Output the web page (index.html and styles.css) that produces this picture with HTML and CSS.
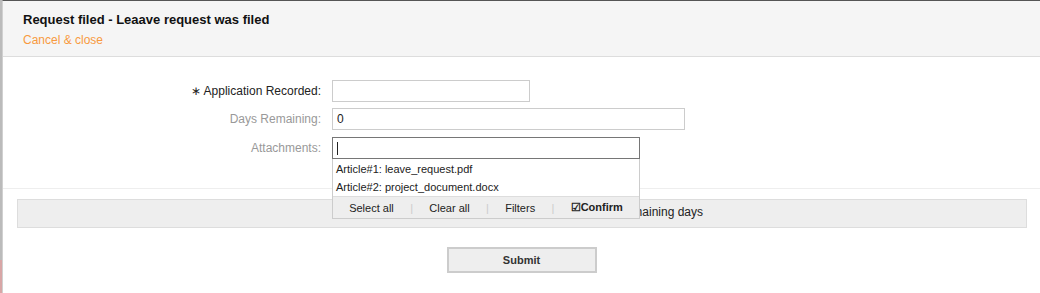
FILE: index.html
```html
<!DOCTYPE html>
<html lang="en">

<head>
    <meta charset="UTF-8">
    <meta name="viewport" content="width=device-width, initial-scale=1.0">
    <title>Request filed</title>
    <link rel="stylesheet" href="styles.css">
</head>

<body>
    <div class="backdrop"></div>

    <div class="dialog">
        <div class="dialog-header">
            <h1 class="title">Request filed - Leaave request was filed</h1>
            <a class="cancel" href="#">Cancel &amp; close</a>
        </div>

        <div class="form">
            <label class="label required"><span class="star">&lowast;</span> Application Recorded:</label>
            <div class="field"><input class="input short" type="text"></div>

            <label class="label">Days Remaining:</label>
            <div class="field"><input class="input long" type="text" value="0"></div>

            <label class="label last">Attachments:</label>
            <div class="field last">
                <div class="input medium focused"><span class="caret"></span></div>
                <div class="dropdown">
                    <ul class="options">
                        <li>Article#1: leave_request.pdf</li>
                        <li>Article#2: project_document.docx</li>
                    </ul>
                    <div class="actions">
                        <span class="action">Select all</span>
                        <span class="sep">|</span>
                        <span class="action">Clear all</span>
                        <span class="sep">|</span>
                        <span class="action">Filters</span>
                        <span class="sep">|</span>
                        <span class="action bold">&#9745;Confirm</span>
                    </div>
                </div>
            </div>
        </div>

        <div class="notice">Check your remaining days</div>

        <div class="buttons">
            <button class="submit" type="button">Submit</button>
        </div>
    </div>
</body>

</html>
```

FILE: styles.css
```css
body {
    font-family: "Liberation Sans", Arial, sans-serif;
    margin: 0;
    display: flex;
    height: 293px;
    overflow: hidden;
    background: #fff;
}

.backdrop {
    width: 2px;
    background: linear-gradient(#bbb 0, #bbb 260px, #d8a6a6 260px);
}

.dialog {
    flex: 1;
    border-top: 1px solid #555;
    border-left: 1px solid #d0d0d0;
    background: #fff;
}

.dialog-header {
    background: #f5f5f5;
    border-bottom: 1px solid #ddd;
    padding: 11px 20px 9px;
}

.title {
    font-size: 13px;
    line-height: 15px;
    font-weight: bold;
    color: #111;
    margin: 0 0 6px;
}

.cancel {
    display: block;
    font-size: 12px;
    line-height: 14px;
    color: #f89a3e;
    text-decoration: none;
}

.form {
    display: grid;
    grid-template-columns: 318px 1fr;
    column-gap: 11px;
    row-gap: 6px;
    padding: 23px 0 29px;
    border-bottom: 1px solid #eee;
}

.last {
    margin-top: 1px;
}

.label {
    font-size: 12px;
    color: #999;
    text-align: right;
    line-height: 22px;
}

.label.required {
    color: #222;
}

.star {
    font-size: 12px;
}

.field {
    position: relative;
    height: 22px;
}

.input {
    box-sizing: border-box;
    height: 22px;
    border: 1px solid #ccc;
    font-family: inherit;
    font-size: 12px;
    padding: 0 4px;
    margin: 0;
    color: #222;
    display: block;
}

.input.short {
    width: 198px;
}

.input.long {
    width: 353px;
}

.input.medium {
    width: 308px;
}

.input.focused {
    border-color: #767676;
    display: flex;
    align-items: center;
}

.caret {
    width: 1px;
    height: 13px;
    background: #222;
}

.dropdown {
    position: absolute;
    top: 22px;
    left: 0;
    width: 308px;
    box-sizing: border-box;
    border: 1px solid #ccc;
    border-top: none;
    background: #fff;
    font-size: 11px;
    z-index: 2;
}

.options {
    list-style: none;
    margin: 0;
    padding: 1px 0 0;
}

.options li {
    padding: 0 3px;
    line-height: 18px;
    color: #222;
}

.actions {
    display: flex;
    justify-content: space-around;
    align-items: center;
    background: #eee;
    border-top: 1px solid #ddd;
    height: 21px;
    padding: 0 8px;
    color: #222;
}

.sep {
    color: #ccc;
}

.bold {
    font-weight: bold;
}

.notice {
    margin: 10px 13px 0 14px;
    padding-right: 323px;
    height: 27px;
    line-height: 25px;
    background: #eee;
    border: 1px solid #ddd;
    font-size: 12px;
    color: #222;
    text-align: right;
}

.buttons {
    display: flex;
    justify-content: center;
    padding-top: 19px;
}

.submit {
    width: 150px;
    height: 26px;
    background: #eee;
    border: 2px solid #ccc;
    font-family: inherit;
    font-size: 11px;
    font-weight: bold;
    color: #333;
}
```
